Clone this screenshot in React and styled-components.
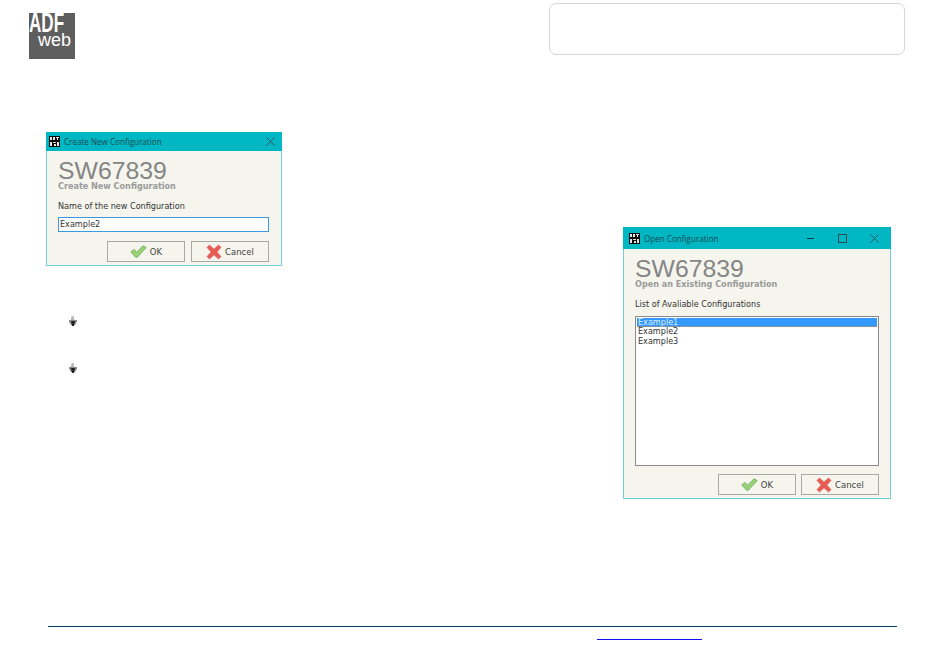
import React from "react"
import styled, { createGlobalStyle } from "styled-components"

const GlobalStyle = createGlobalStyle`
  html, body {
    margin: 0;
    padding: 0;
    background: #fff;
  }
`

const Page = styled.div`
  width: 950px;
  height: 659px;
  display: flex;
  flex-direction: column;
  overflow: hidden;
  background: #fff;
`

const Header = styled.header`
  display: flex;
  justify-content: space-between;
  align-items: flex-start;
  height: 59px;
  padding: 3px 45px 0 29px;
  box-sizing: border-box;
`

const Logo = styled.div`
  width: 46px;
  height: 46px;
  margin-top: 10px;
  background: #5e5e5e;
  display: flex;
  flex-direction: column;
  align-items: flex-end;
  font-family: "Liberation Sans", Arial, sans-serif;
  color: #fff;
`

const LogoTop = styled.span`
  align-self: flex-start;
  height: 20px;
  font-size: 28px;
  line-height: 20px;
  font-weight: 700;
  transform: scaleX(0.61);
  transform-origin: left center;
`

const LogoBottom = styled.span`
  height: 16px;
  margin-top: -1px;
  font-size: 18px;
  line-height: 16px;
  margin-right: 4px;
`

const InfoBox = styled.div`
  width: 356px;
  height: 52px;
  box-sizing: border-box;
  border: 1px solid #d6d6d6;
  border-radius: 7px;
`

const Main = styled.main`
  flex: 1;
  display: flex;
  justify-content: space-between;
  align-items: flex-start;
  padding: 0 59px 0 46px;
`

const Column = styled.div`
  display: flex;
  flex-direction: column;
  margin-top: ${p => p.$top}px;
`

const Dialog = styled.section`
  width: ${p => p.$width}px;
  height: ${p => p.$height}px;
  box-sizing: border-box;
  display: flex;
  flex-direction: column;
  border: 1px solid #6fd0d6;
  border-top: 0;
  background: #f5f5ee;
`

const TitleBar = styled.div`
  height: ${p => p.$height}px;
  flex: none;
  display: flex;
  align-items: center;
  margin: 0 -1px;
  padding-left: ${p => p.$inset}px;
  background: #00b7c3;
  color: #1c4a52;
  font: 8.1px "Open Sans", "Liberation Sans", sans-serif;
`

const TitleText = styled.span`
  margin-left: 4px;
  flex: 1;
  white-space: nowrap;
`

const WindowControl = styled.span`
  width: ${p => p.$width}px;
  height: 100%;
  display: flex;
  align-items: center;
  justify-content: center;
`

const ControlGroup = styled.div`
  height: 100%;
  display: flex;
  margin-right: 1px;
`

const DialogBody = styled.div`
  flex: 1;
  display: flex;
  flex-direction: column;
  padding: 0 ${p => p.$right}px 3px 11px;
  min-height: 0;
`

const Product = styled.div`
  margin-top: ${p => p.$top}px;
  height: 23px;
  font: 24.8px/25px "Liberation Sans", Arial, sans-serif;
  color: #858585;
`

const Subtitle = styled.div`
  height: 10px;
  font: 700 8.1px/10px "DejaVu Sans", sans-serif;
  color: #9a9a9a;
  white-space: nowrap;
`

const FieldLabel = styled.div`
  margin-top: 10px;
  height: 10px;
  font: 8.1px/10px "DejaVu Sans", sans-serif;
  color: #333;
  white-space: nowrap;
`

const NameInput = styled.div`
  margin-top: 6px;
  height: 15px;
  box-sizing: border-box;
  border: 1px solid #3c9be0;
  background: #fff;
  padding-left: 1px;
  font: 8.1px/13px "DejaVu Sans", sans-serif;
  color: #333;
`

const ListBox = styled.div`
  margin-top: 7px;
  flex: 1;
  box-sizing: border-box;
  border: 1px solid #8a8a8a;
  background: #fff;
  padding: 1px;
`

const ListItem = styled.div`
  height: 9.4px;
  box-sizing: border-box;
  padding-left: 1px;
  font: 8.1px/9.4px "DejaVu Sans", sans-serif;
  color: ${p => (p.$selected ? "#dfefff" : "#333")};
  background: ${p => (p.$selected ? "#3399ff" : "transparent")};
  border-bottom: ${p => (p.$selected ? "1px dotted #cf8a45" : "0")};
`

const Buttons = styled.div`
  margin-top: ${p => p.$top}px;
  display: flex;
  justify-content: flex-end;
  gap: ${p => p.$gap}px;
`

const Button = styled.div`
  width: 78px;
  height: 21px;
  box-sizing: border-box;
  border: 1px solid #a9a9a3;
  display: flex;
  align-items: center;
  justify-content: center;
  gap: 3px;
  font: 8.5px "DejaVu Sans", sans-serif;
  color: #444;
`

const BulletList = styled.ul`
  list-style: none;
  margin: 50px 0 0 23px;
  padding: 0;
  display: flex;
  flex-direction: column;
  gap: 37px;
`

const Bullet = styled.li`
  height: 10px;
  display: flex;
`

const Footer = styled.footer`
  height: 33px;
  flex: none;
  margin: 0 53px 0 48px;
  border-top: 1px solid #003e70;
  box-sizing: border-box;
  display: flex;
  padding-left: 549px;
`

const FooterLink = styled.a`
  width: 105px;
  height: 1px;
  margin-top: 12px;
  background: #1010f0;
`

const AppIcon = () => (
  <svg width="11" height="11" viewBox="0 0 11 11">
    <rect width="11" height="11" fill="#0c0c0c" />
    <path d="M1 1h2v3H1zM4 1h2v3H4zM7 1h3v1H7zM8 2h1v2H8zM1 6h2v4H1zM4 6h3v1H4zM5 8h2v2H5zM8 6h2v4H8z" fill="#e4e4e4" />
  </svg>
)

const CheckIcon = () => (
  <svg width="17" height="13" viewBox="0 0 17 13">
    <path
      d="M.8 7L3.8 4.4 6.8 7 13 .8 16.2 2.6 7.4 12.2H5.6z"
      fill="#9ad27a"
      stroke="#6aa955"
      strokeWidth="0.8"
      strokeLinejoin="round"
    />
  </svg>
)

const CrossIcon = () => (
  <svg width="16" height="16" viewBox="0 0 16 16">
    <path
      d="M.8 3.4L3.4.8 8 4.8 12.6.8 15.2 3.4 11.2 8 15.2 12.6 12.6 15.2 8 11.2 3.4 15.2.8 12.6 4.8 8z"
      fill="#e85b55"
      stroke="#e39591"
      strokeWidth="0.6"
      strokeLinejoin="round"
    />
  </svg>
)

const CloseIcon = () => (
  <svg width="9" height="9" viewBox="0 0 9 9">
    <path d="M.5.5l8 8M8.5.5l-8 8" stroke="#1f5a62" strokeWidth="1" fill="none" />
  </svg>
)

const MinimizeIcon = () => (
  <svg width="9" height="9" viewBox="0 0 9 9">
    <path d="M1 4.5h7" stroke="#123a40" strokeWidth="1" />
  </svg>
)

const MaximizeIcon = () => (
  <svg width="9" height="9" viewBox="0 0 9 9">
    <rect x=".5" y=".5" width="8" height="8" stroke="#1f4a50" fill="none" />
  </svg>
)

const BulletIcon = () => (
  <svg width="8" height="10" viewBox="0 0 8 10">
    <path d="M2.5 0h2l.8 4h-3.4z" fill="#b5b5b5" />
    <path d="M0 4h8v1.5L6 9H2L0 5.5z" fill="#8a8a8a" />
    <path d="M2 5h4L5 10H3z" fill="#222" />
  </svg>
)

const DialogButtons = ({ top, gap }) => (
  <Buttons $top={top} $gap={gap}>
    <Button>
      <CheckIcon />
      OK
    </Button>
    <Button>
      <CrossIcon />
      Cancel
    </Button>
  </Buttons>
)

export default function App() {
  return (
    <Page>
      <GlobalStyle />
      <Header>
        <Logo>
          <LogoTop>ADF</LogoTop>
          <LogoBottom>web</LogoBottom>
        </Logo>
        <InfoBox />
      </Header>
      <Main>
        <Column $top={73}>
          <Dialog $width={236} $height={134}>
            <TitleBar $height={19} $inset={3}>
              <AppIcon />
              <TitleText>Create New Configuration</TitleText>
              <ControlGroup>
                <WindowControl $width={22}>
                  <CloseIcon />
                </WindowControl>
              </ControlGroup>
            </TitleBar>
            <DialogBody $right={12}>
              <Product $top={7}>SW67839</Product>
              <Subtitle>Create New Configuration</Subtitle>
              <FieldLabel>Name of the new Configuration</FieldLabel>
              <NameInput>Example2</NameInput>
              <DialogButtons top={9} gap={6} />
            </DialogBody>
          </Dialog>
          <BulletList>
            <Bullet>
              <BulletIcon />
            </Bullet>
            <Bullet>
              <BulletIcon />
            </Bullet>
          </BulletList>
        </Column>
        <Column $top={168}>
          <Dialog $width={268} $height={272}>
            <TitleBar $height={22} $inset={6}>
              <AppIcon />
              <TitleText>Open Configuration</TitleText>
              <ControlGroup>
                <WindowControl $width={32}>
                  <MinimizeIcon />
                </WindowControl>
                <WindowControl $width={32}>
                  <MaximizeIcon />
                </WindowControl>
                <WindowControl $width={32}>
                  <CloseIcon />
                </WindowControl>
              </ControlGroup>
            </TitleBar>
            <DialogBody $right={11}>
              <Product $top={7}>SW67839</Product>
              <Subtitle>Open an Existing Configuration</Subtitle>
              <FieldLabel>List of Avaliable Configurations</FieldLabel>
              <ListBox>
                <ListItem $selected>Example1</ListItem>
                <ListItem>Example2</ListItem>
                <ListItem>Example3</ListItem>
              </ListBox>
              <DialogButtons top={8} gap={5} />
            </DialogBody>
          </Dialog>
        </Column>
      </Main>
      <Footer>
        <FooterLink />
      </Footer>
    </Page>
  )
}
